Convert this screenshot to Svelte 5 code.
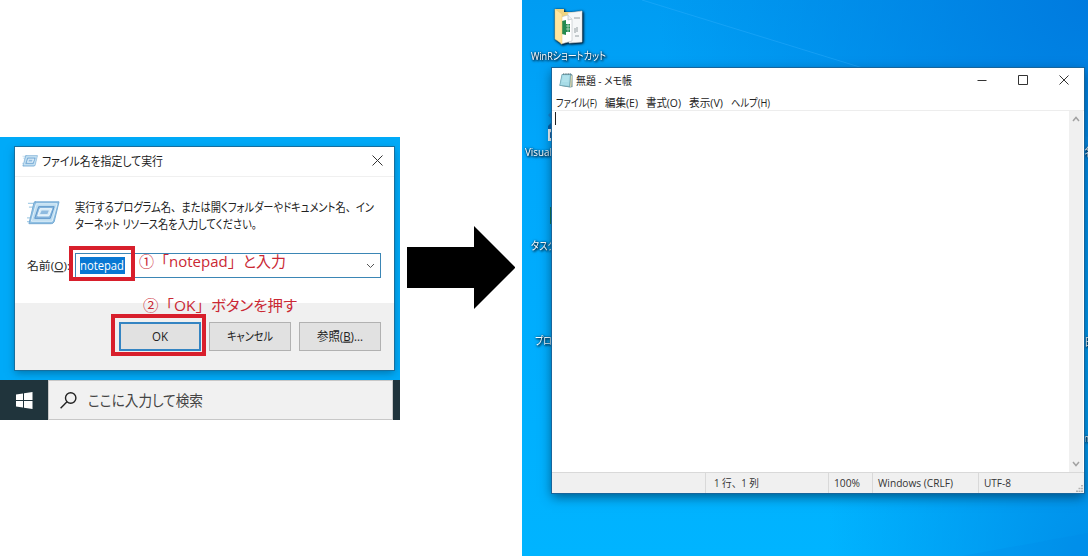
<script>
  const menus = [
    { text: 'ファイル(F)', width: 41 },
    { text: '編集(E)', width: 33 },
    { text: '書式(O)', width: 35 },
    { text: '表示(V)', width: 34 },
    { text: 'ヘルプ(H)', width: 39 }
  ];
  const pieces = (text) => text.split(/([、。「」])/).filter(Boolean);
</script>

{#snippet label(text, width, size, key = '', tail = '')}
  <svg class="label" {width} height={size} font-size={size}>
    <text x="0" y={size * 0.88} textLength={width} lengthAdjust="spacingAndGlyphs">{#each pieces(text) as piece}<tspan class:full={/[、。「」]/.test(piece)}>{piece}</tspan>{/each}{#if key}<tspan text-decoration="underline">{key}</tspan>{/if}{tail}</text>
  </svg>
{/snippet}

{#snippet runIcon(width, height)}
  <svg {width} {height} viewBox="0 0 34 24">
    <path d="M1 2H12M2 6H10M0 17H8M0 21H8" stroke="#a9cfe8" stroke-width="1.3" />
    <path d="M8 .5H33L28 21Q27 23 25 23H2L7 2Q7 .5 9 .5Z" fill="#8fbfe2" stroke="#75a9d3" />
    <path d="M9.500 2.500H31L26 20.500H4.500Z" fill="#bddcf0" stroke="#e2f2fb" />
    <path d="M12 5.500H28L24 17.500H8Z" fill="#8bb9df" stroke="#5b94c8" />
    <path d="M13.500 7.500H25.500L22.500 15H11Z" fill="#d8ebf7" stroke="#eef8fd" />
    <path d="M15 9.500H22.500L21 13H13.500Z" fill="#8fbbe0" />
  </svg>
{/snippet}

<main>
  <section class="capture">
    <div class="dialog">
      <header class="dialog-title">
        {@render runIcon(16, 12)}
        {@render label('ファイル名を指定して実行', 121, 12)}
        <svg class="close" width="11" height="11" viewBox="0 0 11 11"><path d="M.5.5l10 10M10.5.5l-10 10" /></svg>
      </header>
      <div class="dialog-body">
        <div class="message">
          {@render runIcon(33, 24)}
          <div class="lines">
            {@render label('実行するプログラム名、または開くフォルダーやドキュメント名、イン', 299, 12)}
            {@render label('ターネット リソース名を入力してください。', 187, 12)}
          </div>
        </div>
        <div class="field">
          {@render label('名前(', 43, 11.5, 'O', '):')}
          <div class="combo">
            <span class="selected">{@render label('notepad', 44, 12)}</span>
            <svg class="chevron" width="9" height="6" viewBox="0 0 9 6"><path d="M1 1l3.500 3.500L8 1" /></svg>
          </div>
        </div>
      </div>
      <footer class="buttons">
        <button class="primary">{@render label('OK', 16, 12)}</button>
        <button>{@render label('キャンセル', 46, 12)}</button>
        <button>{@render label('参照(', 46, 12, 'B', ')...')}</button>
      </footer>
    </div>
    <div class="mark mark-name"></div>
    <div class="mark mark-ok"></div>
    <div class="note note-name">{@render label('①「notepad」と入力', 147, 15)}</div>
    <div class="note note-ok">{@render label('②「OK」ボタンを押す', 154, 15)}</div>
    <div class="taskbar">
      <div class="start">
        <svg width="17" height="17" viewBox="0 0 17 17" fill="#fff">
          <path d="M0 2.400L7 1.400V8H0ZM8 1.200L16.500 0V8H8ZM0 9H7V15.600L0 14.600ZM8 9H16.500V17L8 15.800Z" />
        </svg>
      </div>
      <div class="search">
        <svg width="17" height="17" viewBox="0 0 17 17" fill="none" stroke="#222" stroke-width="1.4">
          <circle cx="10.700" cy="6" r="5.200" /><path d="M7 9.800L.6 16.300" />
        </svg>
        {@render label('ここに入力して検索', 115, 15)}
      </div>
    </div>
  </section>

  <svg class="arrow" width="108" height="83" viewBox="0 0 108 83"><path d="M0 21H67V0L108.500 41.500L67 83V62H0Z" /></svg>

  <section class="desktop">
    <svg class="beams" width="566" height="556" viewBox="0 0 566 556">
      <path d="M120 0L566 137V152L370 77Z" fill="#20a8ff" opacity=".12" />
      <path d="M120 0L370 77" stroke="#3bb4ff" opacity=".35" />
      <path d="M440 556L566 533V556Z" fill="#0087e8" opacity=".2" />
    </svg>
    <div class="shortcut folder">
      <svg width="29" height="37" viewBox="0 0 29 37">
        <path d="M1 1H10V4H22V31H1Z" fill="#f1d580" />
        <path d="M14 5L28 3V34L15 35Z" fill="#f5f7f8" stroke="#d4dadd" stroke-width=".6" />
        <path d="M20 10H26M21 20V25M23 19V24M21 28H25" stroke="#8b9399" stroke-width=".9" />
        <path d="M7 9L14 7L18 11V33L7 36Z" fill="#fff" stroke="#b8c0c3" stroke-width=".6" />
        <path d="M14 7V12L18 11" fill="#edf0f1" stroke="#adb5b8" stroke-width=".6" />
        <path d="M8 13L12 12V16H16V24H12V27L8 26Z" fill="#258a50" />
        <path d="M12 18H16M12 21H16M14 16V24" stroke="#c9ead7" stroke-width=".7" />
        <path d="M1 1L8 6V36L1 31Z" fill="#ffe6a0" stroke="#e9ca73" stroke-width=".5" />
      </svg>
      {@render label('WinRショートカット', 75, 11)}
    </div>
    <svg class="shortcut vs" width="10" height="34" viewBox="0 0 10 34">
      <path d="M0 6L5 1L10 5V10L5 12Z" fill="#1786d5" /><path d="M0 17L5 12L10 10V21H0Z" fill="#075fa8" />
      <path d="M0 20H10V32H0Z" fill="#fff" /><path d="M3 29V24Q4 22 9 23" fill="none" stroke="#235c99" stroke-width="2" />
    </svg>
    <div class="shortcut visual">{@render label('Visual', 27, 11)}</div>
    <div class="shortcut green"></div>
    <div class="shortcut task">{@render label('タスク', 25, 11)}</div>
    <div class="shortcut program">{@render label('プロ', 17, 11)}</div>
    <div class="shortcut edge edge-one">{@render label('名', 11, 11)}</div>
    <div class="shortcut edge edge-two">{@render label('日', 11, 11)}</div>
    <div class="shortcut edge edge-three">{@render label('m', 8, 11)}</div>

    <div class="notepad">
      <header class="notepad-title">
        <svg width="14" height="15" viewBox="0 0 14 15">
          <path d="M3 1L12 .7L13.500 2V14L11 14.500L.5 12.800Z" fill="#668b96" />
          <path d="M3 1.500H11.500L10.500 13.500L.8 12.300Z" fill="#a7dce7" stroke="#73abb8" stroke-width=".7" />
          <path d="M12 2L13 3L12.500 13.500L11 14Z" fill="#e4ddb0" />
          <path d="M4 1H12" stroke="#526b71" stroke-dasharray="1 .7" />
          <path d="M4 4H10M3.500 6H9.700M3 8H9.400" stroke="#c4edf3" stroke-width=".7" />
        </svg>
        {@render label('無題 - メモ帳', 56, 11)}
        <div class="controls">
          <svg width="10" height="10" viewBox="0 0 10 10"><path d="M.5 5.500H9.500" /></svg>
          <svg width="10" height="10" viewBox="0 0 10 10"><path d="M.5.5H9.500V9.500H.5Z" /></svg>
          <svg width="10" height="10" viewBox="0 0 10 10"><path d="M.5.5l9 9M9.500.5l-9 9" /></svg>
        </div>
      </header>
      <nav>
        {#each menus as menu}
          {@render label(menu.text, menu.width, 11)}
        {/each}
      </nav>
      <div class="editor">
        <div class="page"><i class="caret"></i></div>
        <div class="scrollbar">
          <svg width="8" height="6" viewBox="0 0 8 6"><path d="M1 5l3-3.500L7 5" /></svg>
          <svg width="8" height="6" viewBox="0 0 8 6"><path d="M1 1l3 3.500L7 1" /></svg>
        </div>
      </div>
      <footer class="status">
        <span></span>
        <span>{@render label('1 行、1 列', 45, 10.5)}</span>
        <span>{@render label('100%', 26, 10.5)}</span>
        <span>{@render label('Windows (CRLF)', 75, 10.5)}</span>
        <span>{@render label('UTF-8', 27, 10.5)}
          <svg class="grip" width="7" height="7" viewBox="0 0 7 7" fill="#b3b3b3"><path d="M5 0h2v1.500H5zM2.500 2.700h2v1.500h-2zM5 2.700h2v1.500H5zM0 5.500h2V7H0zM2.500 5.500h2V7h-2zM5 5.500h2V7H5z" /></svg>
        </span>
      </footer>
    </div>
  </section>
</main>

<style>
  :global(body) { background: #fff; overflow: hidden; }
  main, main * { box-sizing: border-box; }
  main {
    width: 1088px; height: 556px; display: flex; align-items: flex-start;
    font-family: "Open Sans", "Noto Sans CJK JP", sans-serif; color: #222;
  }
  svg { display: block; flex: none; }
  .label { overflow: visible; fill: currentColor; font-feature-settings: "palt"; }
  .full { font-feature-settings: normal; }
  .capture {
    position: relative; width: 400px; height: 283px; margin-top: 137px;
    padding-top: 10px; background: #00aaf8; overflow: hidden; flex: none;
  }
  .dialog {
    width: 379px; height: 223px; margin-left: 15px; background: #fff;
    box-shadow: 0 0 0 1px #166f9f, 0 3px 8px #00405f80;
    display: flex; flex-direction: column;
  }
  .dialog-title { height: 30px; border-bottom: 1px solid #f0f0f0; display: flex; align-items: center; padding: 0 11px 2px 7px; gap: 4px; }
  .close { margin-left: auto; fill: none; stroke: #333; stroke-width: 1; }
  .dialog-body { height: 126px; padding-top: 24px; }
  .message { display: flex; height: 29px; padding-left: 12px; gap: 15px; }
  .lines { display: flex; flex-direction: column; gap: 5px; }
  .field { display: flex; align-items: center; padding-left: 12px; gap: 5px; margin-top: 23px; height: 25px; }
  .combo { width: 306px; height: 25px; border: 1px solid #3b86b5; display: flex; align-items: center; padding: 0 5px 0 4px; }
  .selected { background: #0878d3; color: #fff; height: 17px; padding-top: 2px; width: 45px; }
  .chevron { margin-left: auto; fill: none; stroke: #555; }
  .buttons { flex: 1; background: #f0f0f0; display: flex; gap: 8px; padding: 19px 12px 0 104px; }
  button {
    width: 82px; height: 29px; padding: 0 0 1px; background: #e1e1e1; border: 1px solid #b1b1b1;
    display: flex; align-items: center; justify-content: center; font: inherit; color: #222;
  }
  .primary { border: 2px solid #3484c2; }
  .mark { position: absolute; border: 4px solid #d81f2c; }
  .mark-name { left: 69px; top: 109px; width: 66px; height: 35px; }
  .mark-ok { left: 111px; top: 177px; width: 95px; height: 42px; }
  .note { position: absolute; color: #ca2834; }
  .note-name { left: 139px; top: 117px; }
  .note-ok { left: 143px; top: 161px; }
  .taskbar { display: flex; height: 40px; margin-top: 10px; background: #20343c; }
  .start { width: 48px; display: flex; align-items: center; justify-content: center; }
  .search { width: 345px; background: #f1f1f1; border: 1px solid #c8c8c8; display: flex; align-items: center; gap: 11px; padding-left: 11px; color: #444; }
  .arrow { margin: 226px 7px 0; }
  .desktop {
    position: relative; width: 566px; height: 556px; flex: none; overflow: hidden;
    background:
      radial-gradient(ellipse 430px 400px at 100% 0, #007bdf 0, #007bdf00 100%),
      radial-gradient(ellipse 260px 360px at 100% 100%, #0090ea 0, #0090ea00 100%),
      linear-gradient(180deg, #009cf2 0, #00a8fc 30%, #00b4ff 100%);
  }
  .beams { position: absolute; left: 0; top: 0; }
  .shortcut { position: absolute; color: #fff; filter: drop-shadow(1px 1px 1px #012) drop-shadow(0 0 1px #0128); }
  .folder { left: 9px; top: 8px; display: flex; flex-direction: column; gap: 5px; }
  .folder > :global(svg:first-child) { margin-left: 23px; }
  .vs { left: 26px; top: 109px; filter: none; }
  .visual { left: 3px; top: 146px; }
  .green { left: 28px; top: 207px; width: 8px; height: 17px; background: #15794a; filter: none; }
  .task { left: 9px; top: 240px; }
  .program { left: 13px; top: 335px; }
  .edge { left: 562px; }
  .edge-one { top: 146px; }
  .edge-two { top: 336px; }
  .edge-three { top: 432px; }
  .notepad {
    position: absolute; left: 30px; top: 68px; width: 532px; height: 425px; background: #fff;
    box-shadow: 0 0 0 1px #17659c, 0 4px 11px #00304fb0;
    display: flex; flex-direction: column;
  }
  .notepad-title { height: 24px; display: flex; align-items: center; padding: 0 15px 0 7px; gap: 3px; }
  .controls { margin-left: auto; display: flex; gap: 31px; }
  .controls svg { fill: none; stroke: #333; }
  nav { height: 19px; display: flex; align-items: center; gap: 8px; padding: 2px 0 0 4px; border-bottom: 1px solid #ededed; }
  .editor { flex: 1; display: flex; }
  .page { flex: 1; padding: 1px 3px; }
  .caret { display: block; width: 1px; height: 13px; background: #222; }
  .scrollbar { width: 14px; margin-right: 1px; background: #f0f0f0; display: flex; flex-direction: column; align-items: center; justify-content: space-between; padding: 5px 0; }
  .scrollbar svg { fill: none; stroke: #a2a2a2; stroke-width: 1.5; }
  .status { height: 21px; background: #f0f0f0; border-top: 1px solid #d9d9d9; display: grid; grid-template-columns: 153px 123px 44px 106px 1fr; color: #333; }
  .status span { display: flex; align-items: center; padding: 1px 1px 0 5px; }
  .status span + span { border-left: 1px solid #d9d9d9; }
  .status span:nth-child(2) { padding-left: 8px; }
  .grip { margin-left: auto; align-self: flex-end; margin-bottom: 1px; }
</style>
